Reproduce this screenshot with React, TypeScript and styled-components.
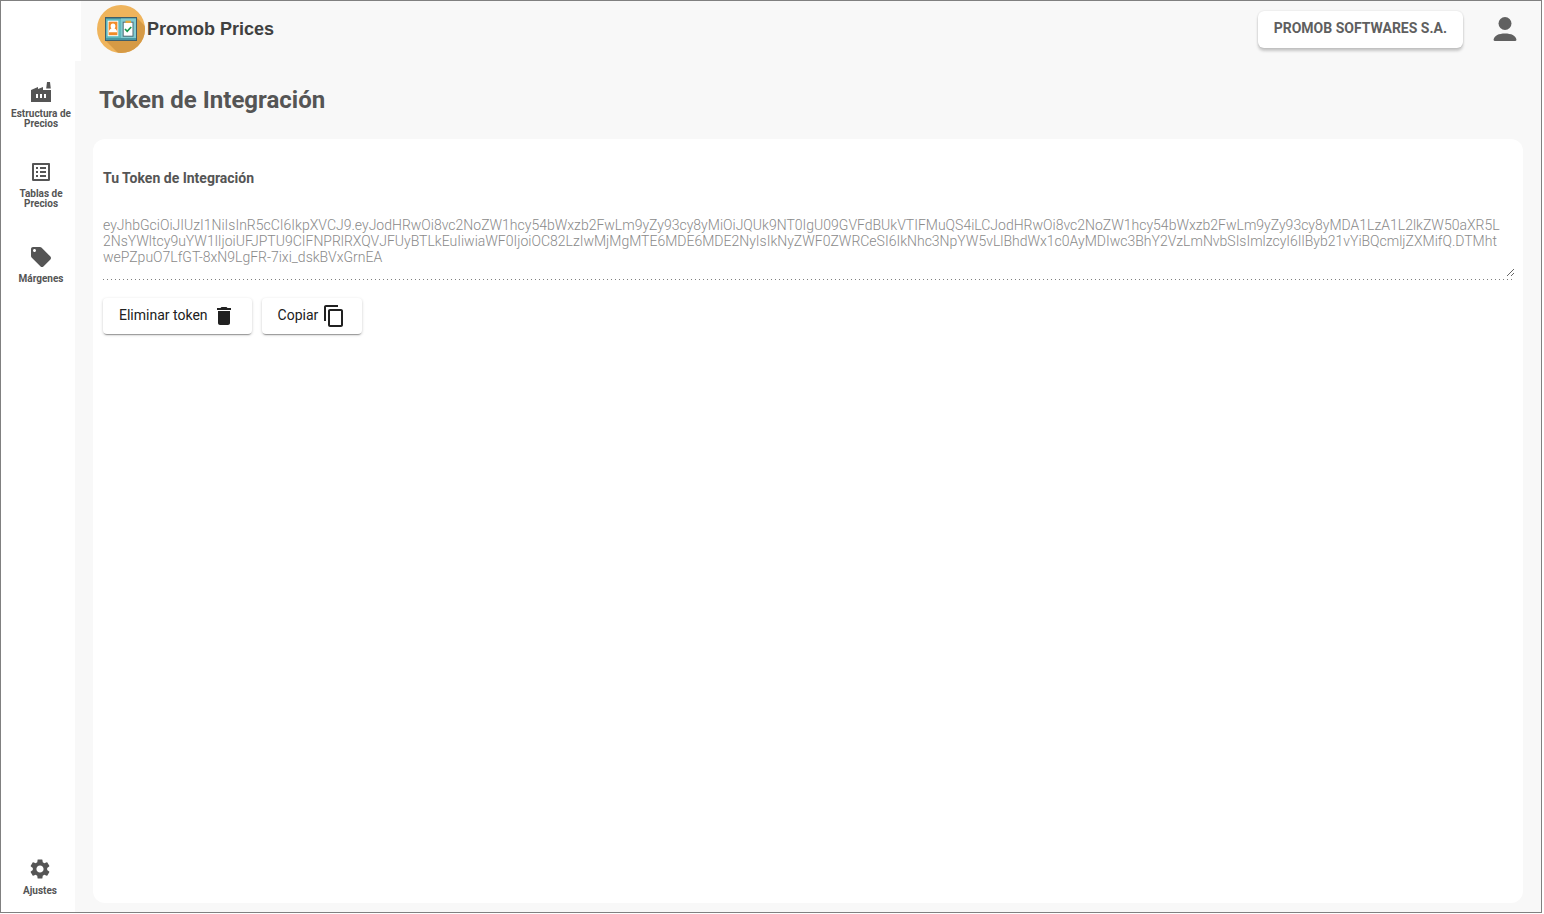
import React from "react";
import styled, { createGlobalStyle } from "styled-components";
import {
  MdContentCopy,
  MdDelete,
  MdFactory,
  MdListAlt,
  MdLocalOffer,
  MdSettings,
} from "react-icons/md";

const TOKEN = [
  "eyJhbGciOiJIUzI1NiIsInR5cCI6IkpXVCJ9.eyJodHRwOi8vc2NoZW1hcy54bWxzb2FwLm9yZy93cy8yMiOiJQUk9NT0IgU09GVFdBUkVTIFMuQS4iLCJodHRwOi8vc2NoZW1hcy54bWxzb2FwLm9yZy93cy8yMDA1LzA1L2lkZW50aXR5L",
  "2NsYWltcy9uYW1lIjoiUFJPTU9CIFNPRlRXQVJFUyBTLkEuIiwiaWF0IjoiOC82LzIwMjMgMTE6MDE6MDE2NyIsIkNyZWF0ZWRCeSI6IkNhc3NpYW5vLlBhdWx1c0AyMDIwc3BhY2VzLmNvbSIsImlzcyI6IlByb21vYiBQcmljZXMifQ.DTMht",
  "wePZpuO7LfGT-8xN9LgFR-7ixi_dskBVxGrnEA",
].join("\n");

const GlobalStyle = createGlobalStyle`
  *, *::before, *::after { box-sizing: border-box; }
  body {
    margin: 0;
    background: #ffffff;
    font-family: Roboto, "Liberation Sans", sans-serif;
    color: #555555;
  }
`;

const Page = styled.div`
  display: flex;
  flex-direction: column;
  min-height: calc(100vh - 1px);
  margin: 0 2px 1px 0;
  border: 1px solid #808080;
  background: #f8f8f8;
`;

const Header = styled.header`
  display: flex;
  align-items: stretch;
  height: 60px;
`;

const Corner = styled.div`
  width: 80px;
  background: #ffffff;
`;

const HeaderBar = styled.div`
  flex: 1;
  display: flex;
  align-items: center;
  padding: 0 24px 4px 16px;
`;

const Brand = styled.a`
  display: flex;
  align-items: center;
  gap: 2px;
  color: #404040;
  font: bold 18px/24px "Liberation Sans", Arial, sans-serif;
  text-decoration: none;
`;

const CompanyButton = styled.button`
  height: 37px;
  margin: 0 30px 0 auto;
  padding: 0 16px 2px;
  border: 0;
  border-radius: 6px;
  background: #ffffff;
  color: #5f5f5f;
  font: bold 14px/20px Roboto, sans-serif;
  box-shadow: 0 3px 3px rgba(0, 0, 0, 0.2), 0 0 2px rgba(0, 0, 0, 0.14);
`;

const UserButton = styled.button`
  display: flex;
  padding: 0;
  border: 0;
  background: none;
  color: #606060;
`;

const Body = styled.div`
  flex: 1;
  display: flex;
`;

const Sidebar = styled.nav`
  display: flex;
  flex-direction: column;
  width: 74px;
  padding: 3px 0 16px 6px;
  background: #ffffff;
`;

const SideLink = styled.a<{ $last?: boolean }>`
  display: flex;
  flex-direction: column;
  align-items: center;
  justify-content: center;
  gap: 5px;
  height: ${(p) => (p.$last ? "auto" : "80px")};
  margin: ${(p) => (p.$last ? "auto 2px 0 0" : "0")};
  color: #555555;
  font-size: 10px;
  font-weight: bold;
  line-height: 10px;
  text-align: center;
  text-decoration: none;

  svg {
    flex: none;
  }
`;

const Main = styled.main`
  flex: 1;
  min-width: 0;
  display: flex;
  flex-direction: column;
  padding: 0 18px 9px;
`;

const Title = styled.h1`
  margin: 23px 6px 22px;
  font-size: 24px;
  font-weight: bold;
  line-height: 33px;
`;

const Card = styled.section`
  flex: 1;
  display: flex;
  flex-direction: column;
  padding: 29px 8px 29px 10px;
  border-radius: 12px;
  background: #ffffff;
`;

const TokenLabel = styled.label`
  font-size: 14px;
  font-weight: bold;
  line-height: 20px;
`;

const Field = styled.div`
  display: flex;
  margin: 29px 0 18px;
  padding-bottom: 3px;
  background: repeating-linear-gradient(
      to right,
      rgba(0, 0, 0, 0.5) 0 1px,
      transparent 1px 4px
    )
    left bottom / calc(100% - 2px) 1px no-repeat;
`;

const TokenText = styled.textarea`
  width: 100%;
  height: 60px;
  padding: 0;
  border: 0;
  outline: 0;
  overflow: hidden;
  resize: vertical;
  background: none;
  color: #8a8a8a;
  font: 300 14px/16px Roboto, sans-serif;
  word-break: break-all;
`;

const Actions = styled.div`
  display: flex;
  gap: 10px;
`;

const ActionButton = styled.button`
  display: flex;
  align-items: center;
  gap: 4px;
  height: 36px;
  padding: 0 16px;
  border: 0;
  border-radius: 4px;
  background: #ffffff;
  color: #212121;
  font: 400 14px/20px Roboto, sans-serif;
  box-shadow: 0 2px 1px -1px rgba(0, 0, 0, 0.3), 0 1px 3px rgba(0, 0, 0, 0.22);

  span {
    padding-bottom: 2px;
  }
`;

function BrandLogo() {
  return (
    <svg width="48" height="48" viewBox="0 0 48 48" aria-hidden="true">
      <defs>
        <clipPath id="disc">
          <circle cx="24" cy="24" r="24" />
        </clipPath>
      </defs>
      <circle cx="24" cy="24" r="24" fill="#efb45c" />
      <path d="M8 35 39 12 60 33 V60 H33Z" fill="#d69a45" clipPath="url(#disc)" />
      <rect x="8" y="12" width="32" height="24" fill="#3f5f6b" />
      <rect x="9" y="13.5" width="30" height="20" fill="#5fb9bd" />
      <path d="M24 13.500H39V33.500H24Z" fill="#82cbd0" />
      <path d="M9 33H39V35H9Z" fill="#4a98a3" />
      <rect x="10.700" y="15.700" width="10.600" height="15.500" fill="#ffffff" />
      <rect x="11.600" y="16.700" width="8.800" height="13.500" fill="#f28c28" />
      <path
        d="M16 18.500c1.700 0 2.500 1.200 2.400 2.700-.1 1.300-.5 1.900-.9 2.300 1.500.5 2.500 1.500 2.600 3.700h-8.200c.1-2.200 1.100-3.200 2.600-3.700-.4-.4-.8-1-.9-2.300-.1-1.500.7-2.700 2.400-2.700Z"
        fill="#ffffff"
      />
      <rect x="25.700" y="16.700" width="10.800" height="15" fill="#4d6a73" />
      <rect x="26.700" y="17.700" width="8.800" height="13" fill="#ffffff" />
      <rect x="28.500" y="15.700" width="5.500" height="2.300" fill="#e5a93c" />
      <path d="m28 24 2.200 2.300 4-4.300" fill="none" stroke="#17964b" strokeWidth="1.700" />
    </svg>
  );
}

function PersonIcon() {
  return (
    <svg width="24" height="26" viewBox="0 0 24 26" fill="currentColor" aria-hidden="true">
      <circle cx="12" cy="7.500" r="6.500" />
      <path d="M.6 23.600C1.200 19.600 5.800 17.500 12 17.500s10.800 2.100 11.400 6.100c.1.900-.3 1.400-1.100 1.400H1.700c-.8 0-1.200-.5-1.100-1.400Z" />
    </svg>
  );
}

export default function App() {
  return (
    <>
      <GlobalStyle />
      <Page>
        <Header>
          <Corner />
          <HeaderBar>
            <Brand href="#">
              <BrandLogo />
              Promob Prices
            </Brand>
            <CompanyButton type="button">PROMOB SOFTWARES S.A.</CompanyButton>
            <UserButton type="button" aria-label="Usuario">
              <PersonIcon />
            </UserButton>
          </HeaderBar>
        </Header>
        <Body>
          <Sidebar>
            <SideLink href="#">
              <MdFactory size={24} />
              <span>Estructura de Precios</span>
            </SideLink>
            <SideLink href="#">
              <MdListAlt size={24} />
              <span>
                Tablas de
                <br />
                Precios
              </span>
            </SideLink>
            <SideLink href="#">
              <MdLocalOffer size={24} />
              <span>Márgenes</span>
            </SideLink>
            <SideLink href="#" $last>
              <MdSettings size={24} />
              <span>Ajustes</span>
            </SideLink>
          </Sidebar>
          <Main>
            <Title>Token de Integración</Title>
            <Card>
              <TokenLabel htmlFor="token">Tu Token de Integración</TokenLabel>
              <Field>
                <TokenText id="token" readOnly spellCheck={false} value={TOKEN} />
              </Field>
              <Actions>
                <ActionButton type="button">
                  <span>Eliminar token</span>
                  <MdDelete size={24} />
                </ActionButton>
                <ActionButton type="button">
                  <span>Copiar</span>
                  <MdContentCopy size={24} />
                </ActionButton>
              </Actions>
            </Card>
          </Main>
        </Body>
      </Page>
    </>
  );
}
